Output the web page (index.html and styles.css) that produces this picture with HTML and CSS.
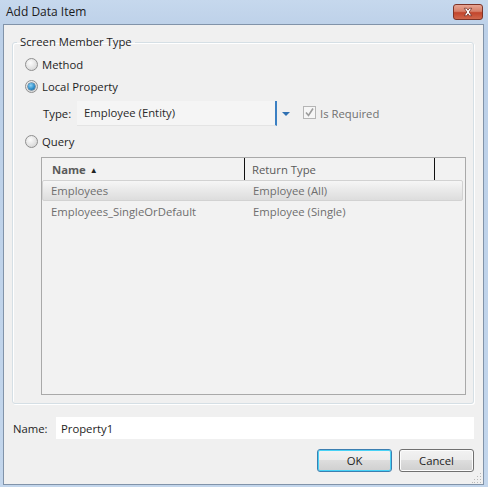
FILE: index.html
```html
<!DOCTYPE html>
<html>
<head>
<meta charset="utf-8">
<link rel="stylesheet" href="styles.css">
</head>
<body>
<div class="window">
  <div class="titlebar">
    <span class="title">Add Data Item</span>
    <span class="close">
      <svg width="30" height="16" viewBox="0 0 30 16">
        <path d="M11 4 L13.5 4 L15 6 L16.5 4 L19 4 L16.3 8 L19 12 L16.5 12 L15 10 L13.5 12 L11 12 L13.7 8 Z" fill="#fff" stroke="#6b2a20" stroke-width="0.8" stroke-linejoin="round"/>
      </svg>
    </span>
  </div>
  <div class="client">
    <fieldset class="group">
      <legend>Screen Member Type</legend>
      <div class="opt first"><span class="radio"></span><span>Method</span></div>
      <div class="opt"><span class="radio on"></span><span>Local Property</span></div>
      <div class="type-row">
        <span class="type-label">Type:</span>
        <div class="combo"><span>Employee (Entity)</span></div>
        <span class="arrow"></span>
        <span class="check">
          <svg width="11" height="11" viewBox="0 0 11 11"><path d="M2 5.5 L4.5 8.5 L9 1.5" fill="none" stroke="#9c9c9c" stroke-width="1.6"/></svg>
        </span>
        <span class="dim">Is Required</span>
      </div>
      <div class="opt query"><span class="radio"></span><span>Query</span></div>
      <div class="list">
        <div class="list-head">
          <div class="hcol h1">Name <span class="sort">▲</span></div>
          <div class="hcol h2">Return Type</div>
        </div>
        <div class="row sel"><span class="c1">Employees</span><span class="c2">Employee (All)</span></div>
        <div class="row"><span class="c1">Employees_SingleOrDefault</span><span class="c2">Employee (Single)</span></div>
      </div>
    </fieldset>
    <div class="name-row">
      <span class="name-label">Name:</span>
      <div class="input">Property1</div>
    </div>
    <div class="buttons">
      <span class="btn ok">OK</span>
      <span class="btn">Cancel</span>
    </div>
    <span class="grip">
      <svg width="10" height="10" viewBox="0 0 10 10" fill="#b8b8b8">
        <rect x="8" y="0" width="1" height="1"/>
        <rect x="5" y="3" width="1" height="1"/><rect x="8" y="3" width="1" height="1"/>
        <rect x="2" y="6" width="1" height="1"/><rect x="5" y="6" width="1" height="1"/><rect x="8" y="6" width="1" height="1"/>
        <rect x="0" y="9" width="1" height="1"/><rect x="2" y="9" width="1" height="1"/><rect x="5" y="9" width="1" height="1"/><rect x="8" y="9" width="1" height="1"/>
      </svg>
    </span>
  </div>
</div>
</body>
</html>
```

FILE: styles.css
```css
* { box-sizing: border-box; }
html, body { margin: 0; padding: 0; }
body {
  width: 488px;
  height: 487px;
  font-family: "Open Sans", "Noto Sans", sans-serif;
  font-size: 11.3px;
  color: #1e1e1e;
  overflow: hidden;
}
.window {
  width: 488px;
  height: 487px;
  background: linear-gradient(#c6d8ed, #bcd0e8 30px, #c3d6ec);
  display: flex;
  flex-direction: column;
  padding: 0 4px 2px 3px;
}
.titlebar {
  height: 24px;
  flex: none;
  display: flex;
  align-items: center;
  justify-content: space-between;
  padding: 0 1px 2px 3px;
}
.title {
  font-size: 12px;
  color: #1b1b1b;
  line-height: 16px;
  margin-top: 1px;
}
.close {
  width: 30px;
  height: 16px;
  margin-top: 2px;
  border: 1px solid #7d3327;
  border-radius: 3px;
  background: linear-gradient(#e8a593, #d6806a 45%, #c2452c 55%, #d0674c);
  display: flex;
  align-items: center;
  justify-content: center;
}
.close svg { display: block; }
.client {
  flex: 1;
  position: relative;
  background: #f0f0f0;
  border: 1px solid #8193a9;
  display: flex;
  flex-direction: column;
  padding: 0 9px 0 8px;
}
.group {
  margin: 9px 0 0 0;
  padding: 0 7px 8px 11px;
  border: 1px solid #d5dfe5;
  border-radius: 3px;
  box-shadow: inset 1px 1px 0 #fff, 1px 1px 0 #fff;
  min-width: 0;
  height: 370px;
}
.group legend {
  padding: 0 3px;
  margin-left: -7px;
  line-height: 16px;
}
.opt {
  height: 22px;
  display: flex;
  align-items: center;
  gap: 4px;
  padding-left: 1px;
}
.opt.first { margin-top: 3px; }
.opt.query { margin-top: 4px; }
.radio {
  width: 13px;
  height: 13px;
  border-radius: 50%;
  border: 1px solid #8f8f8f;
  background: radial-gradient(circle at 40% 35%, #fcfcfc, #dcdcdc 70%, #cfcfcf);
  display: flex;
  align-items: center;
  justify-content: center;
  flex: none;
}
.radio.on::after {
  content: "";
  width: 7px;
  height: 7px;
  border-radius: 50%;
  background: radial-gradient(circle at 40% 35%, #8fd3f5, #2a8bc8 60%, #17527f);
  box-shadow: 0 0 0 0.5px #1d4f74;
}
.type-row {
  margin-top: 3px;
  height: 26px;
  display: flex;
  align-items: center;
  padding-left: 19px;
}
.type-label { width: 34px; flex: none; }
.combo {
  width: 200px;
  height: 25px;
  background: #f5f5f5;
  border-bottom: 1px solid #e4e4e4;
  border-right: 2px solid #3b80c3;
  display: flex;
  align-items: center;
  padding-left: 7px;
  color: #2a2a2a;
}
.arrow {
  width: 0;
  height: 0;
  border-left: 4px solid transparent;
  border-right: 4px solid transparent;
  border-top: 4px solid #2f70b2;
  margin-left: 5px;
  margin-top: 1px;
}
.check {
  width: 13px;
  height: 13px;
  border: 1px solid #b5b5b5;
  background: #f6f6f6;
  margin-left: 13px;
  display: flex;
  align-items: center;
  justify-content: center;
  margin-top: -1px;
}
.check svg { display: block; }
.dim { color: #707070; margin-left: 4px; }
.list {
  margin: 5px 0 0 17px;
  height: 238px;
  border: 1px solid #a9a9a9;
  background: #f2f2f2;
  color: #6e6e6e;
  padding: 0 2px 0 0;
}
.list-head {
  height: 22px;
  display: flex;
}
.hcol {
  height: 22px;
  display: flex;
  align-items: center;
  border-right: 1px solid #111;
}
.h1 {
  width: 203px;
  padding-left: 10px;
  font-weight: bold;
  color: #5a5a5a;
}
.sort { font-size: 8px; margin-left: 4px; color: #222; }
.h2 {
  width: 190px;
  padding-left: 7px;
  color: #5a5a5a;
}
.row {
  height: 21px;
  display: flex;
  align-items: center;
  border: 1px solid transparent;
}
.row.sel {
  background: linear-gradient(#f6f6f6, #e9e9e9 50%, #dddddd);
  border-color: #d2d2d2;
  border-radius: 2px;
}
.row .c1 { width: 202px; padding-left: 8px; }
.row .c2 { padding-left: 8px; }
.name-row {
  margin-top: 13px;
  height: 22px;
  display: flex;
  align-items: center;
}
.name-label { width: 44px; padding-left: 1px; flex: none; }
.input {
  flex: 1;
  height: 22px;
  background: #fff;
  display: flex;
  align-items: center;
  padding-left: 5px;
  color: #1e1e1e;
}
.buttons {
  margin-top: 10px;
  display: flex;
  justify-content: flex-end;
  gap: 7px;
}
.btn {
  width: 75px;
  height: 23px;
  border: 1px solid #707070;
  border-radius: 3px;
  background: linear-gradient(#f2f2f2, #ebebeb 50%, #dddddd 50%, #cfcfcf);
  box-shadow: inset 0 0 0 1px #fcfcfc;
  display: flex;
  align-items: center;
  justify-content: center;
  color: #1e1e1e;
}
.btn.ok {
  border-color: #3c7fb1;
  box-shadow: inset 0 0 0 1px #48d2f6;
}
.grip {
  position: absolute;
  right: 1px;
  bottom: 1px;
}
.grip svg { display: block; }
```
